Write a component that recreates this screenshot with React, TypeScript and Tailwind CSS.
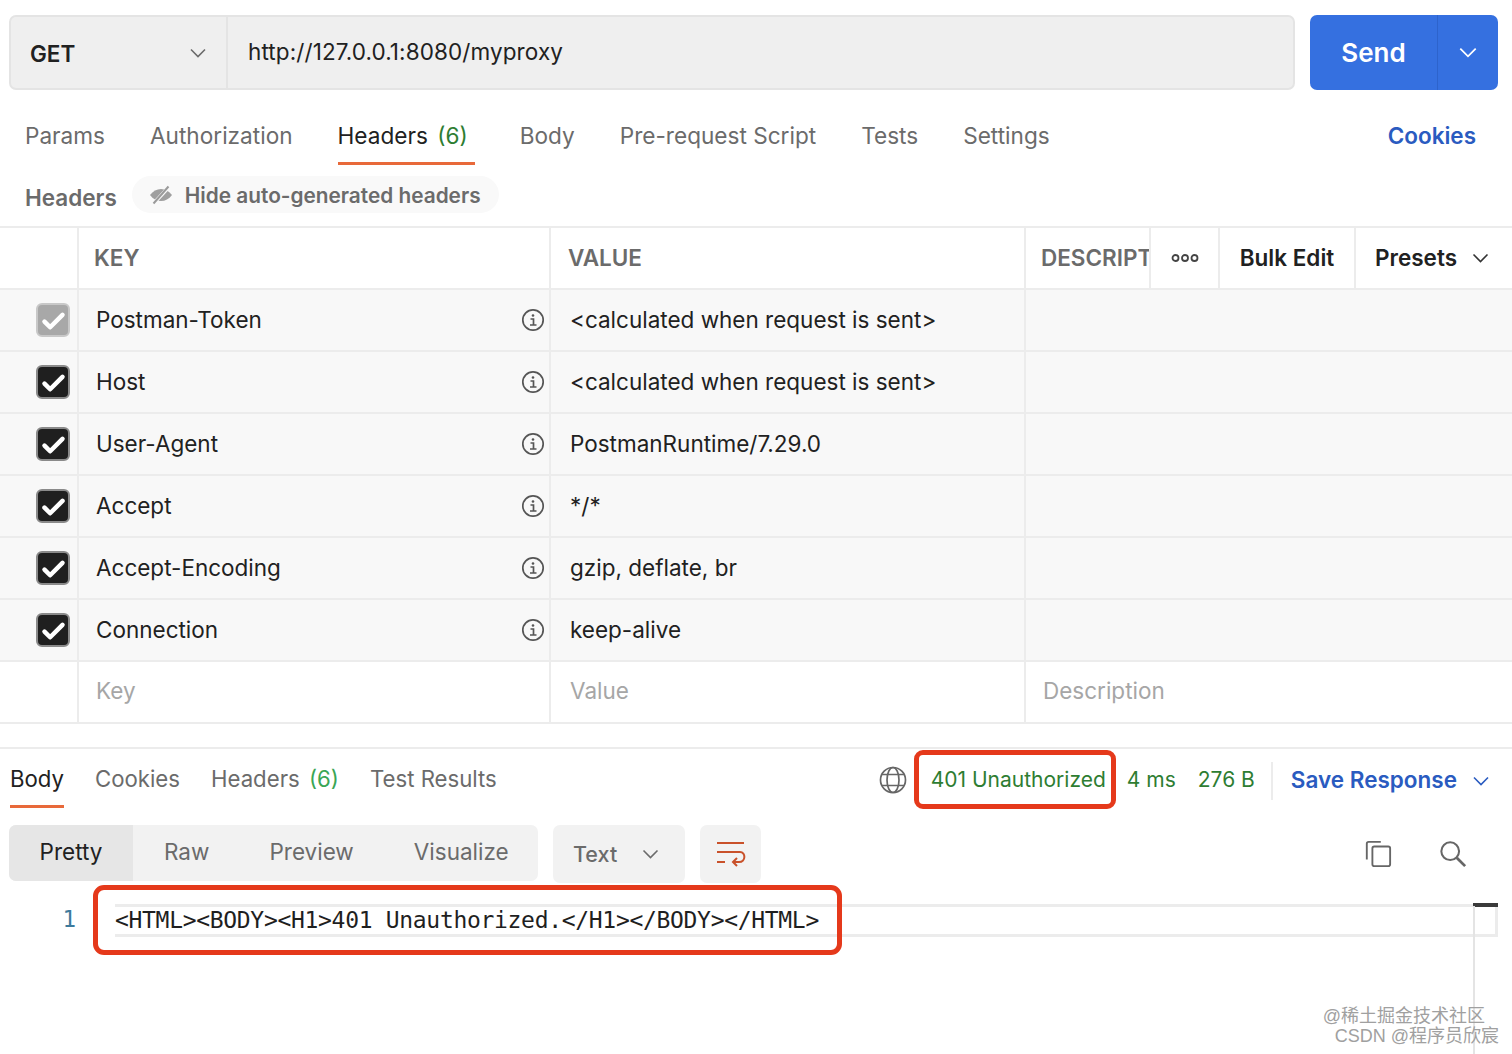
import React from 'react';

const Chevron = ({ className }: { className: string }) => (
  <svg viewBox="0 0 16 10" fill="none" stroke="currentColor" strokeWidth="1.6" className={className}>
    <path d="M1 1.5l7 7 7-7" />
  </svg>
);

const InfoIcon = () => (
  <svg viewBox="0 0 24 24" fill="none" stroke="#555" strokeWidth="1.7" className="w-6 h-6 shrink-0">
    <circle cx="12" cy="12" r="10.2" />
    <path d="M9.5 11h3v6M9 17h6.5" strokeWidth="1.7" />
    <circle cx="12" cy="7.5" r="1.3" fill="#555" stroke="none" />
  </svg>
);

const Check = ({ muted }: { muted?: boolean }) => (
  <div
    className={`w-[34px] h-[34px] rounded-[6px] border-2 flex items-center justify-center ${
      muted ? 'bg-[#a8a8a8] border-[#c8c8c8]' : 'bg-[#1f1f1f] border-[#8a8a8a]'
    }`}
  >
    <svg viewBox="0 0 24 24" fill="none" stroke="white" strokeWidth="4" strokeLinecap="round" strokeLinejoin="round" className="w-[27px] h-[27px]">
      <path d="M4 13l5 5L20 7" />
    </svg>
  </div>
);

const headerRows = [
  { key: 'Postman-Token', value: '<calculated when request is sent>', muted: true },
  { key: 'Host', value: '<calculated when request is sent>' },
  { key: 'User-Agent', value: 'PostmanRuntime/7.29.0' },
  { key: 'Accept', value: '*/*' },
  { key: 'Accept-Encoding', value: 'gzip, deflate, br' },
  { key: 'Connection', value: 'keep-alive' },
];

const requestTabs = ['Params', 'Authorization', 'Headers', 'Body', 'Pre-request Script', 'Tests', 'Settings'];

const App: React.FC = () => {
  return (
    <div className="relative w-[1512px] h-[1054px] overflow-hidden bg-white font-['Inter',sans-serif] text-[22.5px] text-[#212121]">
      {/* url bar */}
      <div className="flex gap-[15px] pt-[15px] pl-[9px] pr-[14px] h-[90px]">
        <div className="flex flex-1 rounded-[7px] border-2 border-[#e4e4e4] bg-[#efefef]">
          <div className="w-[217px] flex items-center justify-between pl-[19px] pr-[20px] border-r-2 border-[#e4e4e4]">
            <span className="font-semibold text-[#212121] pt-[3px]">GET</span>
            <Chevron className="w-[16px] h-[10px] text-[#6b6b6b]" />
          </div>
          <div className="flex items-center pl-[20px] text-[#212121] tracking-[0.1px] pb-[1px]">http://127.0.0.1:8080/myproxy</div>
        </div>
        <div className="w-[188px] flex rounded-[7px] bg-[#3570e0] text-white">
          <div className="w-[127px] flex items-center justify-center text-[26px] font-semibold">Send</div>
          <div className="flex-1 flex items-center justify-center border-l border-[#2d63cc]">
            <Chevron className="w-[18px] h-[11px] text-white" />
          </div>
        </div>
      </div>

      {/* request tabs */}
      <div className="flex items-start h-[76px] pl-[25px] pr-[36px] pt-[29px] text-[#6b6b6b]">
        <div className="flex gap-[45px] text-[22.6px]">
          {requestTabs.map((tab) =>
            tab === 'Headers' ? (
              <div key={tab} className="relative pr-[7px] text-[#212121]">
                Headers <span className="ml-[3px] text-[#2e7d32]">(6)</span>
                <div className="absolute left-0 right-0 top-[43px] h-[3px] bg-[#e8693a]" />
              </div>
            ) : (
              <div key={tab}>{tab}</div>
            )
          )}
        </div>
        <div className="ml-auto font-semibold text-[#2a5bc0]">Cookies</div>
      </div>

      {/* headers title */}
      <div className="flex items-center h-[60px] pl-[25px] pb-[3px]">
        <span className="font-semibold text-[#6b6b6b] pt-[6px]">Headers</span>
        <div className="ml-[15px] w-[367px] h-[37px] rounded-full bg-[#f9f9f9] flex items-center pl-[17px] pt-[2px] font-semibold text-[20.8px] text-[#6b6b6b]">
          <svg viewBox="0 0 24 20" className="w-[24px] h-[20px] mr-[12px] -mt-[2px]">
            <path d="M1 10c3-4 6.800-6 11-6s8 2 11 6c-3 4-6.800 6-11 6s-8-2-11-6z" fill="#9f9f9f" />
            <path d="M6 17L19 3" stroke="#f9f9f9" strokeWidth="3.600" />
            <path d="M4.500 18.500L19.500 1.500" stroke="#9a9a9a" strokeWidth="2" />
          </svg>
          Hide auto-generated headers
        </div>
      </div>

      {/* table */}
      <div className="border-t-2 border-[#ececec]">
        <div className="flex h-[62px] border-b-2 border-[#ececec] font-semibold text-[#6b6b6b]">
          <div className="w-[79px] border-r-2 border-[#ececec]" />
          <div className="w-[472px] border-r-2 border-[#ececec] flex items-center pl-[15px]">KEY</div>
          <div className="w-[475px] border-r-2 border-[#ececec] flex items-center pl-[17px]">VALUE</div>
          <div className="w-[125px] border-r-2 border-[#ececec] flex items-center pl-[15px] overflow-hidden whitespace-nowrap">DESCRIPTION</div>
          <div className="w-[69px] border-r-2 border-[#ececec] flex items-center justify-center">
            <svg viewBox="0 0 28 10" fill="none" stroke="#444" strokeWidth="1.800" className="w-[28px] h-[10px]">
              <circle cx="4.500" cy="5" r="3" />
              <circle cx="14" cy="5" r="3" />
              <circle cx="23.500" cy="5" r="3" />
            </svg>
          </div>
          <div className="w-[136px] border-r-2 border-[#ececec] flex items-center justify-center text-[#212121]">Bulk Edit</div>
          <div className="flex-1 flex items-center pl-[19px] gap-[15px] text-[#212121]">
            Presets
            <Chevron className="w-[17px] h-[10px] text-[#333]" />
          </div>
        </div>
        {headerRows.map((row) => (
          <div key={row.key} className="flex h-[62px] border-b-2 border-[#ececec] bg-[#f8f8f8]">
            <div className="w-[79px] border-r-2 border-[#ececec] flex items-center justify-end pr-[7px]">
              <Check muted={row.muted} />
            </div>
            <div className="w-[472px] border-r-2 border-[#ececec] flex items-center justify-between pl-[17px] pr-[4px]">
              <span>{row.key}</span>
              <InfoIcon />
            </div>
            <div className="w-[475px] border-r-2 border-[#ececec] flex items-center pl-[19px]">{row.value}</div>
            <div className="flex-1" />
          </div>
        ))}
        <div className="flex h-[62px] border-b-2 border-[#ececec] text-[#a6a6a6]">
          <div className="w-[79px] border-r-2 border-[#ececec]" />
          <div className="w-[472px] border-r-2 border-[#ececec] flex items-center pl-[17px] pb-[2px]">Key</div>
          <div className="w-[475px] border-r-2 border-[#ececec] flex items-center pl-[19px] pb-[2px]">Value</div>
          <div className="flex-1 flex items-center pl-[17px] pb-[2px]">Description</div>
        </div>
      </div>

      {/* response header */}
      <div className="mt-[23px] border-t-2 border-[#ececec] h-[78px] flex items-start pl-[10px] pr-[23px] pt-[13px] text-[#6b6b6b]">
        <div className="flex gap-[31px] text-[22.2px]">
          <div className="relative text-[#212121]">
            Body
            <div className="absolute left-0 right-0 top-[43px] h-[3px] bg-[#e8693a]" />
          </div>
          <div>Cookies</div>
          <div>
            Headers <span className="ml-[3px] text-[#3aa655]">(6)</span>
          </div>
          <div>Test Results</div>
        </div>
        <div className="ml-auto flex items-center text-[21px] text-[#2e7d32]">
          <svg viewBox="0 0 28 28" fill="none" stroke="#666" strokeWidth="1.700" className="w-[28px] h-[28px] mr-[24px] mt-[-3px]">
            <circle cx="14" cy="14" r="12.500" />
            <ellipse cx="14" cy="14" rx="6" ry="12.500" />
            <path d="M3 8.500h22M3 19.500h22" />
          </svg>
          <span className="pb-[3px]">401 Unauthorized</span>
          <span className="ml-[21px] pb-[3px]">4 ms</span>
          <span className="ml-[22px] pb-[3px]">276 B</span>
          <div className="w-[2px] h-[38px] bg-[#ececec] ml-[16px]" />
          <span className="ml-[18px] pb-[3px] text-[22.5px] font-semibold text-[#2a5bc0]">Save Response</span>
          <Chevron className="w-[16px] h-[10px] ml-[16px] text-[#2a5bc0]" />
        </div>
      </div>

      {/* response toolbar */}
      <div className="flex items-start h-[60px] pl-[9px] pr-[45px] text-[#6b6b6b]">
        <div className="flex w-[529px] h-[56px] rounded-[7px] bg-[#f2f2f2]">
          <div className="w-[124px] flex items-center justify-center rounded-l-[7px] bg-[#e6e6e6] pb-[2px] text-[#212121]">Pretty</div>
          <div className="flex items-center pl-[31px] pb-[2px] gap-[60px]">
            <span>Raw</span>
            <span>Preview</span>
            <span>Visualize</span>
          </div>
        </div>
        <div className="ml-[15px] w-[132px] h-[58px] rounded-[7px] bg-[#f2f2f2] flex items-center pl-[20px] gap-[25px] text-[21.5px] font-medium">
          <span className="pt-[1px]">Text</span>
          <Chevron className="w-[17px] h-[10px] text-[#6b6b6b]" />
        </div>
        <div className="ml-[15px] w-[61px] h-[58px] rounded-[7px] bg-[#f2f2f2] flex items-center justify-center">
          <svg viewBox="0 0 30 26" fill="none" stroke="#c9512a" strokeWidth="2" className="w-[30px] h-[26px]">
            <path d="M1 2h27M1 11h23c6 0 6 10-1 10h-6M21 17l-4 4 4 4M1 21h8" />
          </svg>
        </div>
        <div className="ml-auto flex items-center gap-[47px] h-[58px]">
          <svg viewBox="0 0 30 30" fill="none" stroke="#666" strokeWidth="2" className="w-[28px] h-[28px]">
            <path d="M3 21V4a2 2 0 0 1 2-2h13" />
            <rect x="9" y="7" width="19" height="21" rx="2" />
          </svg>
          <svg viewBox="0 0 30 30" fill="none" stroke="#666" strokeWidth="2.200" className="w-[28px] h-[28px]">
            <circle cx="12" cy="12" r="9.500" />
            <path d="M19 19l9 9" strokeWidth="3" />
          </svg>
        </div>
      </div>

      {/* response body */}
      <div className="flex items-start pt-[19px] pl-[9px] pr-[14px]">
        <div className="w-[67px] text-right text-[#3d7a9c] leading-[31px] font-['DejaVu_Sans_Mono',monospace]">1</div>
        <div className="ml-[39px] flex-1 h-[33px] border-y-[3px] border-r-[3px] border-[#ececec] flex items-center pb-[1px] text-[23px] font-['DejaVu_Sans_Mono',monospace] whitespace-nowrap tracking-[-0.31px] text-[#1f1f1f]">
          {'<HTML><BODY><H1>401 Unauthorized.</H1></BODY></HTML>'}
        </div>
      </div>

      {/* scrollbar */}
      <div className="absolute left-[1473px] top-[903px] w-[25px] h-[4px] bg-[#3a3a3a]" />
      <div className="absolute left-[1473px] top-[906px] bottom-0 w-[2px] bg-[#e4e4e4]" />

      {/* annotations */}
      <div className="absolute left-[914px] top-[750px] w-[202px] h-[59px] rounded-[9px] border-[5px] border-[#e5391b]" />
      <div className="absolute left-[93px] top-[885px] w-[749px] h-[70px] rounded-[11px] border-[5px] border-[#e5391b]" />

      {/* watermark */}
      <div className="absolute right-[13px] top-[1006px] text-right text-[18px] leading-[20px] text-[#a0a0a0] font-['Liberation_Sans','Noto_Sans_CJK_SC',sans-serif]">
        <div className="pr-[14px]">@稀土掘金技术社区</div>
        <div>CSDN @程序员欣宸</div>
      </div>
    </div>
  );
};

export default App;
